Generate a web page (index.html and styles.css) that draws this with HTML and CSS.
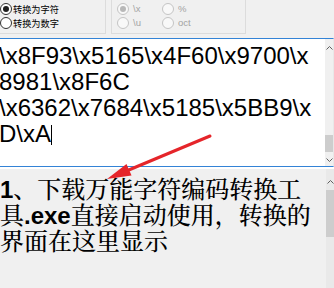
FILE: index.html
```html
<!DOCTYPE html>
<html lang="zh-CN">
<head>
<meta charset="utf-8">
<title>万能字符编码转换工具</title>
<link rel="stylesheet" href="styles.css">
</head>
<body>
<div class="app">
  <div class="toolbar">
    <div class="group group-mode">
      <label class="opt"><span class="radio checked"></span><span class="lbl">转换为字符</span></label>
      <label class="opt"><span class="radio"></span><span class="lbl">转换为数字</span></label>
    </div>
    <div class="group group-format">
      <label class="opt disabled"><span class="radio checked"></span><span class="lbl">\x</span></label>
      <label class="opt disabled"><span class="radio"></span><span class="lbl">%</span></label>
      <label class="opt disabled"><span class="radio"></span><span class="lbl">\u</span></label>
      <label class="opt disabled"><span class="radio"></span><span class="lbl">oct</span></label>
    </div>
  </div>

  <div class="editor editor-out">
    <div class="code">
      <div>\x8F93\x5165\x4F60\x9700\x</div>
      <div>8981\x8F6C</div>
      <div>\x6362\x7684\x5185\x5BB9\x</div>
      <div>D\xA<span class="caret"></span></div>
    </div>
    <div class="scrollbar sb-out">
      <div class="sb-btn sb-up"><svg width="7" height="4" viewBox="0 0 7 4"><path d="M0.5 3.5 L3.5 0.5 L6.5 3.5" fill="none" stroke="#606060" stroke-width="1"/></svg></div>
      <div class="sb-track"><div class="sb-thumb"></div></div>
      <div class="sb-btn sb-down"><svg width="7" height="4" viewBox="0 0 7 4"><path d="M0.5 0.5 L3.5 3.5 L6.5 0.5" fill="none" stroke="#606060" stroke-width="1"/></svg></div>
    </div>
  </div>

  <div class="editor editor-note">
    <div class="note">
      <div class="line"><b>1</b>、下载万能字符编码转换工</div>
      <div class="line">具<b>.exe</b>直接启动使用，转换的</div>
      <div class="line">界面在这里显示</div>
    </div>
    <div class="scrollbar sb-note">
      <div class="sb-btn sb-up"><svg width="7" height="4" viewBox="0 0 7 4"><path d="M0.5 3.5 L3.5 0.5 L6.5 3.5" fill="none" stroke="#606060" stroke-width="1"/></svg></div>
      <div class="sb-thumb"></div>
    </div>
  </div>

  <svg class="arrow" width="334" height="288" viewBox="0 0 334 288">
    <line x1="210" y1="136" x2="124" y2="172" stroke="#e5252a" stroke-width="3" stroke-linecap="round"/>
    <polygon points="107,179 131.5,175.5 126.5,164" fill="#e5252a"/>
  </svg>
</div>
</body>
</html>
```

FILE: styles.css
```css
* {
  box-sizing: border-box;
  margin: 0;
  padding: 0;
}

html, body {
  width: 334px;
  height: 288px;
  overflow: hidden;
}

body {
  background: #f0f0f0;
  font-family: "Noto Sans CJK SC", sans-serif;
}

.app {
  position: relative;
  width: 334px;
  height: 288px;
  display: flex;
  flex-direction: column;
}

/* ---------- top option groups ---------- */
.toolbar {
  height: 38px;
  flex: none;
  display: flex;
  align-items: flex-start;
}

.group {
  height: 34px;
  border-bottom: 1px solid #dcdcdc;
  padding-top: 3px;
}

.group-mode {
  width: 106px;
  border-right: 1px solid #dcdcdc;
  display: flex;
  flex-direction: column;
  gap: 2px;
}

.group-format {
  margin-left: 5px;
  width: 135px;
  border-left: 1px solid #dcdcdc;
  border-right: 1px solid #dcdcdc;
  padding-left: 5px;
  display: grid;
  grid-template-columns: 45px auto;
  row-gap: 2px;
  align-content: start;
}

.opt {
  display: flex;
  align-items: center;
  height: 12px;
}

.radio {
  width: 12px;
  height: 12px;
  border-radius: 50%;
  border: 1px solid #333;
  background: #fff;
  display: flex;
  align-items: center;
  justify-content: center;
  flex: none;
}

.radio.checked::after {
  content: "";
  width: 6px;
  height: 6px;
  border-radius: 50%;
  background: #1e1e1e;
}

.lbl {
  margin-left: 1px;
  font-size: 9.2px;
  line-height: 12px;
  color: #000;
  white-space: nowrap;
}

.opt.disabled .radio {
  border-color: #c4c4c4;
  background: #f8f8f8;
}

.opt.disabled .radio.checked::after {
  background: #b8b8b8;
}

.opt.disabled .lbl {
  margin-left: 4px;
  font-family: "Liberation Sans", sans-serif;
  font-size: 9.5px;
  color: #a3a3a3;
}

/* ---------- editors ---------- */
.editor {
  display: flex;
}

.editor-out {
  height: 129px;
  flex: none;
  background: #fff;
  border-top: 1px solid #3383d6;
  border-bottom: 1px solid #3383d6;
  border-right: 1px solid #e8e8e8;
}

.code {
  flex: 1;
  margin-left: -1px;
  padding-top: 4px;
  font-family: "Liberation Sans", Arial, sans-serif;
  font-size: 24px;
  line-height: 26px;
  color: #000;
  white-space: nowrap;
  overflow: hidden;
}

.caret {
  display: inline-block;
  width: 1px;
  height: 20px;
  background: #000;
  vertical-align: -3px;
}

.scrollbar {
  width: 8px;
  flex: none;
  display: flex;
  flex-direction: column;
}

.sb-out {
  background: #f0f0f0;
}

.sb-btn {
  display: flex;
  justify-content: center;
  align-items: center;
  flex: none;
}

.sb-out .sb-up {
  height: 18px;
}

.sb-track {
  flex: 1;
  display: flex;
  flex-direction: column;
  justify-content: flex-end;
}

.sb-out .sb-thumb {
  height: 17px;
}

.sb-thumb {
  background: #cdcdcd;
  flex: none;
}

.sb-out .sb-down {
  height: 14px;
  align-items: flex-start;
  padding-top: 6px;
}

.editor-note {
  flex: 1;
  border-top: 2px solid #fff;
  background: #f0f0f0;
}

.note {
  flex: 1;
  padding-top: 6px;
  font-family: "Noto Serif CJK SC", "Noto Sans CJK SC", serif;
  font-size: 24px;
  font-weight: 500;
  color: #000;
  white-space: nowrap;
  overflow: hidden;
}

.note .line {
  height: 26px;
  line-height: 26px;
}

.note b {
  font-family: "Liberation Sans", Arial, sans-serif;
  font-weight: bold;
  line-height: 26px;
}

.sb-note {
  background: #e9e9e9;
}

.sb-note .sb-up {
  height: 21px;
  padding-top: 5px;
}

.sb-note .sb-thumb {
  height: 47px;
}

/* ---------- annotation overlay ---------- */
.arrow {
  position: absolute;
  left: 0;
  top: 0;
  pointer-events: none;
}
```
